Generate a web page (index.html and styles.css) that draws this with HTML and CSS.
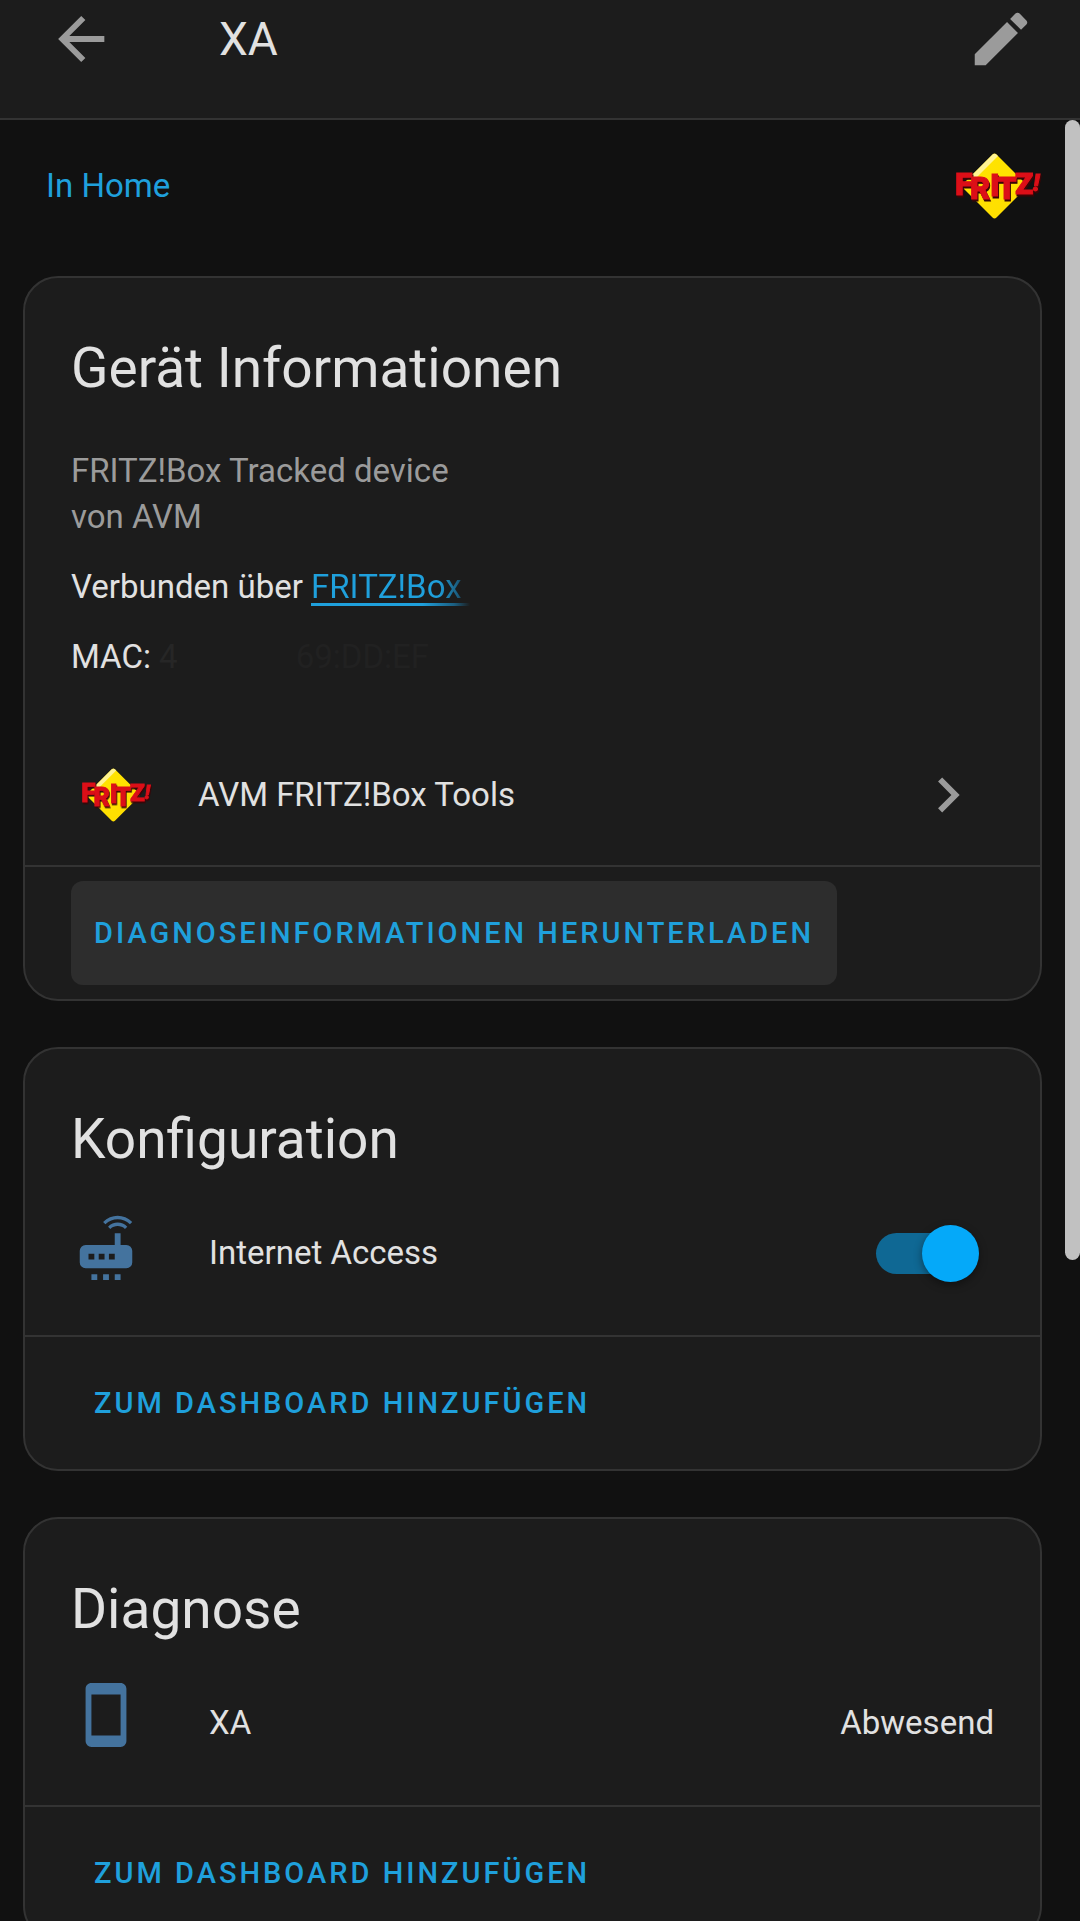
FILE: index.html
```html
<!DOCTYPE html>
<html lang="de">
<head>
<meta charset="utf-8">
<meta name="viewport" content="width=device-width, initial-scale=1">
<title>XA</title>
<link rel="stylesheet" href="styles.css">
</head>
<body>
<svg class="defs" aria-hidden="true">
  <defs>
    <linearGradient id="gold" x1="0" y1="0" x2="1" y2="1">
      <stop offset="0" stop-color="#fff3a0"/>
      <stop offset="0.2" stop-color="#ffe400"/>
      <stop offset="1" stop-color="#ffdc00"/>
    </linearGradient>
    <symbol id="fritz" viewBox="0 0 86 66">
      <path d="M36.500 1.500Q38.500 -.5 40.500 1.500L70 31Q72 33 70 35L40.500 64.500Q38.500 66.500 36.500 64.500L7 35Q5 33 7 31Z" fill="url(#gold)"/>
      <path d="M15.500 22.500L36.500 1.500Q38.500 0 40.500 1.500L42 3L19 26Z" fill="#fff6b8" opacity=".8"/>
      <g class="fritz-letters">
        <text x="-1" y="42" font-size="32">F</text>
        <text x="14" y="46" font-size="31">R</text>
        <text x="34" y="43" font-size="32">I</text>
        <text x="41" y="46" font-size="31">T</text>
        <text x="59" y="41" font-size="30">Z</text>
        <text x="77" y="38" font-size="24" font-style="italic">!</text>
      </g>
    </symbol>
  </defs>
</svg>

<header class="toolbar">
  <button class="icon-button" type="button" aria-label="Zurück">
    <svg class="icon" viewBox="0 0 24 24"><path d="M20,11V13H8L13.5,18.5L12.08,19.92L4.16,12L12.08,4.08L13.5,5.5L8,11H20Z"/></svg>
  </button>
  <h1 class="toolbar-title">XA</h1>
  <button class="icon-button" type="button" aria-label="Bearbeiten">
    <svg class="icon" viewBox="0 0 24 24"><path d="M20.71,7.04C21.1,6.65 21.1,6 20.71,5.63L18.37,3.29C18,2.9 17.35,2.9 16.96,3.29L15.12,5.12L18.87,8.87M3,17.25V21H6.75L17.81,9.93L14.06,6.18L3,17.25Z"/></svg>
  </button>
</header>

<div class="viewport">
  <main class="content">
    <div class="area">
      <a class="area-link" href="#home">In Home</a>
      <svg class="logo-large" role="img" aria-label="FRITZ!"><use href="#fritz"/></svg>
    </div>

    <section class="card">
      <h2 class="card-title">Gerät Informationen</h2>
      <div class="info">
        <p class="muted">FRITZ!Box Tracked device<br>von AVM</p>
        <p>Verbunden über <a class="hub-link" href="#hub">FRITZ!Box&nbsp;</a></p>
        <p>MAC: <span class="erased">4</span><span class="erased erased-tail">69:DD:EF</span></p>
      </div>
      <a class="integration" href="#integration">
        <svg class="logo-small" aria-hidden="true"><use href="#fritz"/></svg>
        <span class="grow">AVM FRITZ!Box Tools</span>
        <svg class="icon" viewBox="0 0 24 24" aria-hidden="true"><path d="M8.59,16.58L13.17,12L8.59,7.41L10,6L16,12L10,18L8.59,16.58Z"/></svg>
      </a>
      <div class="actions">
        <button class="text-button pressed" type="button">DIAGNOSEINFORMATIONEN HERUNTERLADEN</button>
      </div>
    </section>

    <section class="card">
      <h2 class="card-title">Konfiguration</h2>
      <div class="entity">
        <svg class="icon entity-icon" viewBox="0 0 24 24" aria-hidden="true">
          <path d="M20.200,4.900L21,4.100C19.600,2.700 17.800,2 16,2C14.200,2 12.400,2.700 11,4.100L11.800,4.900C13,3.800 14.500,3.200 16,3.200C17.500,3.200 19,3.800 20.200,4.900M19.300,5.700C18.400,4.800 17.200,4.300 16,4.300C14.800,4.300 13.600,4.800 12.700,5.700L13.500,6.500C14.200,5.800 15.100,5.500 16,5.500C16.900,5.500 17.800,5.800 18.500,6.500L19.300,5.700M19,12H17V8H15V12H5A2,2 0 0,0 3,14V18A2,2 0 0,0 5,20H19A2,2 0 0,0 21,18V14A2,2 0 0,0 19,12M8,17H6V15H8V17M11.500,17H9.500V15H11.500V17M15,17H13V15H15V17M7,22H9V24H7V22M11,22H13V24H11V22M15,22H17V24H15V22Z"/>
        </svg>
        <label class="grow" for="internet-access">Internet Access</label>
        <input class="switch" type="checkbox" role="switch" id="internet-access" checked>
      </div>
      <div class="actions">
        <button class="text-button" type="button">ZUM DASHBOARD HINZUFÜGEN</button>
      </div>
    </section>

    <section class="card">
      <h2 class="card-title">Diagnose</h2>
      <div class="entity">
        <svg class="icon entity-icon" viewBox="0 0 24 24" aria-hidden="true"><path d="M17,19H7V5H17M17,1H7C5.890,1 5,1.890 5,3V21A2,2 0 0,0 7,23H17A2,2 0 0,0 19,21V3C19,1.890 18.100,1 17,1Z"/></svg>
        <span class="grow">XA</span>
        <span>Abwesend</span>
      </div>
      <div class="actions">
        <button class="text-button" type="button">ZUM DASHBOARD HINZUFÜGEN</button>
      </div>
    </section>
  </main>
  <div class="scrollbar" aria-hidden="true"><div class="scrollbar-thumb"></div></div>
</div>
</body>
</html>
```
FILE: styles.css
```css
:root {
  --page: #111111;
  --surface: #1c1c1c;
  --line: #333333;
  --text: #e1e1e1;
  --muted: #9b9b9b;
  --accent-text: #1fa0dc;
  --accent-faded: #1b5f82;
  --state: #44739e;
}

* {
  box-sizing: border-box;
}

body {
  margin: 0;
  height: 100vh;
  overflow: hidden;
  display: flex;
  flex-direction: column;
  background: var(--page);
  color: var(--text);
  font-family: Roboto, "Liberation Sans", sans-serif;
  font-size: 33px;
  line-height: 46px;
}

.defs {
  position: absolute;
  width: 0;
  height: 0;
}

.icon {
  flex: none;
  display: block;
  width: 70px;
  height: 70px;
  fill: var(--muted);
}

.grow {
  flex: 1;
}

.toolbar {
  flex: none;
  display: flex;
  align-items: center;
  padding: 4px 44px 44px 46px;
  background: var(--surface);
  border-bottom: 2px solid var(--line);
}

.toolbar-title {
  flex: 1;
  margin: 0;
  padding: 0 103px;
  font-size: 46px;
  font-weight: 400;
}

.icon-button {
  padding: 0;
  border: 0;
  background: none;
}

.viewport {
  flex: 1;
  min-height: 0;
  display: flex;
}

.content {
  flex: 1;
  min-width: 0;
  display: flex;
  flex-direction: column;
  gap: 46px;
  padding: 33px 23px 0;
  overflow: hidden;
}

.scrollbar {
  flex: none;
  width: 15px;
}

.scrollbar-thumb {
  height: 63.3%;
  border-radius: 8px;
  background: #c1c1c1;
}

.area {
  flex: none;
  display: flex;
  align-items: center;
  justify-content: space-between;
  padding: 0 0 11px 23px;
}

.area-link {
  color: var(--accent-text);
  text-decoration: none;
}

.logo-large {
  width: 86px;
  height: 66px;
}

.logo-small {
  flex: none;
  width: 70px;
  height: 54px;
}

.fritz-letters {
  font-family: Roboto, "Liberation Sans", sans-serif;
  font-weight: 900;
  fill: #dc0f18;
  stroke: #dc0f18;
  stroke-width: 1px;
  filter: drop-shadow(1px 2px 0 #3a0406);
}

.card {
  flex: none;
  padding-top: 43px;
  background: var(--surface);
  border: 2px solid var(--line);
  border-radius: 35px;
}

.card-title {
  margin: 0;
  padding: 0 46px;
  font-size: 55px;
  font-weight: 400;
  line-height: 94px;
}

.info {
  display: flex;
  flex-direction: column;
  gap: 24px;
  padding: 33px 46px 44px;
}

.info p {
  margin: 0;
}

.info .muted {
  color: var(--muted);
}

/* The link fades out towards the erased model number. */
.hub-link {
  color: transparent;
  background: linear-gradient(90deg, var(--accent-text) 80%, var(--accent-faded) 92%, var(--surface)) text,
    linear-gradient(90deg, var(--accent-text) 70%, var(--accent-faded) 90%, var(--surface)) 0 100% / 100% 3px no-repeat;
  text-decoration: none;
}

.erased {
  color: #262626;
}

.erased-tail {
  margin-left: 118px;
  color: #212121;
}

.integration {
  display: flex;
  align-items: center;
  gap: 46px;
  height: 141px;
  padding: 0 57px;
  color: inherit;
  text-decoration: none;
}

.entity {
  display: flex;
  align-items: center;
  min-height: 86px;
  margin: 24px 0 39px;
  padding: 0 46px;
}

.entity-icon {
  align-self: flex-start;
  margin-right: 68px;
  fill: var(--state);
}

.switch {
  appearance: none;
  display: flex;
  align-items: center;
  width: 103px;
  height: 57px;
  margin: 0 15px 0 0;
}

.switch::before {
  content: "";
  width: 94px;
  height: 41px;
  border-radius: 21px;
  background: #0f6894;
}

.switch::after {
  content: "";
  flex: none;
  width: 57px;
  height: 57px;
  margin-left: -48px;
  border-radius: 50%;
  background: #05a9f9;
  box-shadow: 0 3px 8px rgba(0, 0, 0, 0.4);
}

.actions {
  padding: 14px 46px;
  border-top: 2px solid var(--line);
}

.text-button {
  height: 104px;
  padding: 0 23px;
  border: 0;
  border-radius: 12px;
  background: none;
  color: var(--accent-text);
  font-family: inherit;
  font-size: 29px;
  font-weight: 500;
  letter-spacing: 3px;
  white-space: nowrap;
}

.text-button.pressed {
  background: #2d2d2d;
}
```
